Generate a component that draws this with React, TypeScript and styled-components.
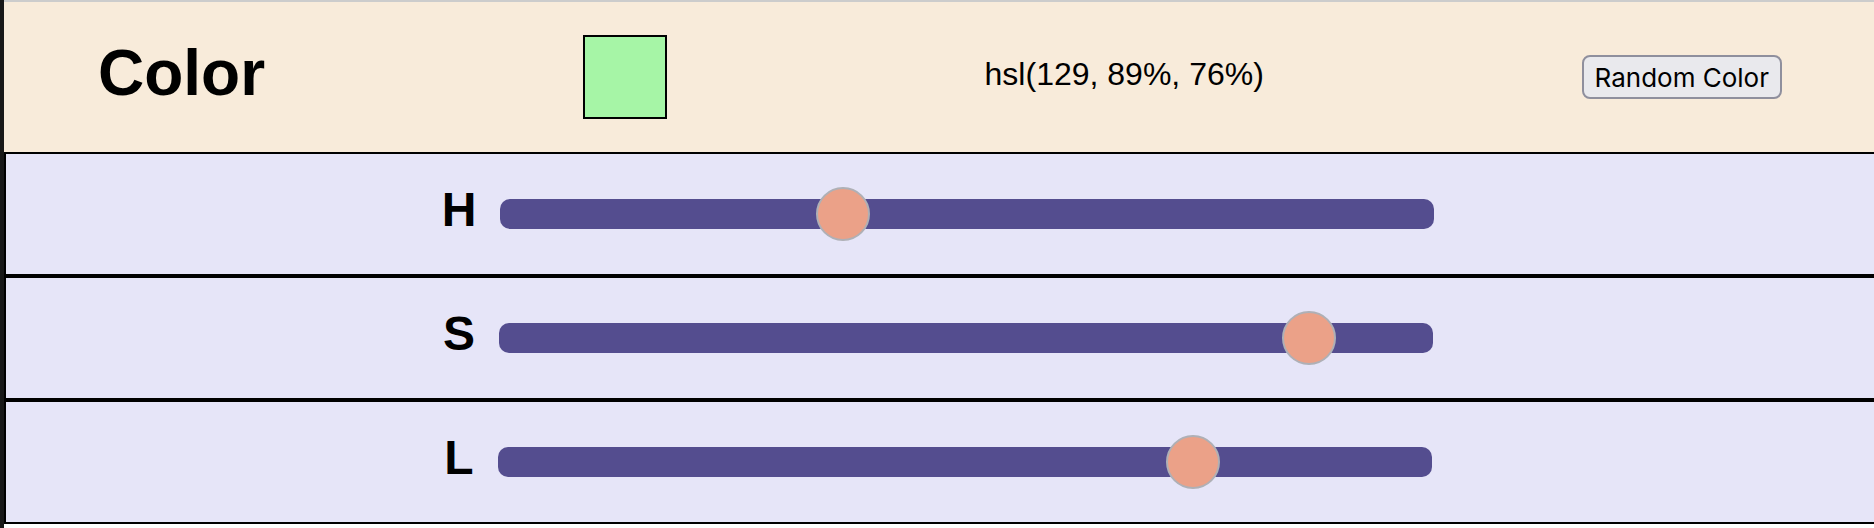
import React from "react";
import styled, { createGlobalStyle } from "styled-components";

const GlobalStyle = createGlobalStyle`
  *, *::before, *::after { box-sizing: border-box; }
  body {
    margin: 0;
    background: #ffffff;
    color: #000000;
    font-family: "Liberation Sans", Helvetica, Arial, sans-serif;
  }
`;

const Page = styled.main`
  min-height: 100vh;
  border-left: 4px solid #181818;
  overflow: hidden;
`;

const Header = styled.header`
  display: flex;
  align-items: center;
  justify-content: space-between;
  height: 152px;
  padding: 0 92px 0 94px;
  border-top: 2px solid #cccccc;
  background: #f8ebda;
`;

const Title = styled.h1`
  margin: 0;
  padding-bottom: 8px;
  font-size: 64px;
  line-height: 72px;
`;

const Swatch = styled.div`
  width: 84px;
  height: 84px;
  border: 2px solid #000000;
  background: #a6f5a6;
`;

const ColorValue = styled.output`
  padding-bottom: 6px;
  font-size: 32px;
  line-height: 36px;
`;

const RandomButton = styled.button`
  height: 44px;
  padding: 2px 11px 0;
  border: 2px solid #8f8f9d;
  border-radius: 8px;
  background: #e9e9ed;
  color: #000000;
  font-family: Inter, sans-serif;
  font-size: 26px;
  line-height: 32px;
  cursor: pointer;
`;

const Row = styled.div`
  display: flex;
  align-items: center;
  justify-content: center;
  height: 124px;
  border: 2px solid #000000;
  border-right: none;
  background: #e6e5f8;
`;

const RowLabel = styled.label`
  padding-bottom: 8px;
  font-size: 48px;
  font-weight: 700;
  line-height: 56px;
`;

const Slider = styled.input`
  appearance: none;
  flex: none;
  width: 50%;
  height: 30px;
  margin: 0 4px 0 24px;
  border-radius: 10px;
  background: #544d8f;

  &::-webkit-slider-thumb {
    appearance: none;
    width: 54px;
    height: 54px;
    border: 2px solid #afb0b6;
    border-radius: 50%;
    background: #eba188;
    cursor: pointer;
  }

  &::-moz-range-thumb {
    width: 50px;
    height: 50px;
    border: 2px solid #afb0b6;
    border-radius: 50%;
    background: #eba188;
  }
`;

const channels = [
  { name: "H", max: 360, value: 129 },
  { name: "S", max: 100, value: 89 },
  { name: "L", max: 100, value: 76 },
];

export default function App() {
  const [h, s, l] = channels;
  return (
    <>
      <GlobalStyle />
      <Page>
        <Header>
          <Title>Color</Title>
          <Swatch />
          <ColorValue>{`hsl(${h.value}, ${s.value}%, ${l.value}%)`}</ColorValue>
          <RandomButton type="button">Random Color</RandomButton>
        </Header>
        {channels.map(({ name, max, value }) => (
          <Row key={name}>
            <RowLabel htmlFor={`channel-${name}`}>{name}</RowLabel>
            <Slider id={`channel-${name}`} type="range" min={0} max={max} defaultValue={value} />
          </Row>
        ))}
      </Page>
    </>
  );
}
